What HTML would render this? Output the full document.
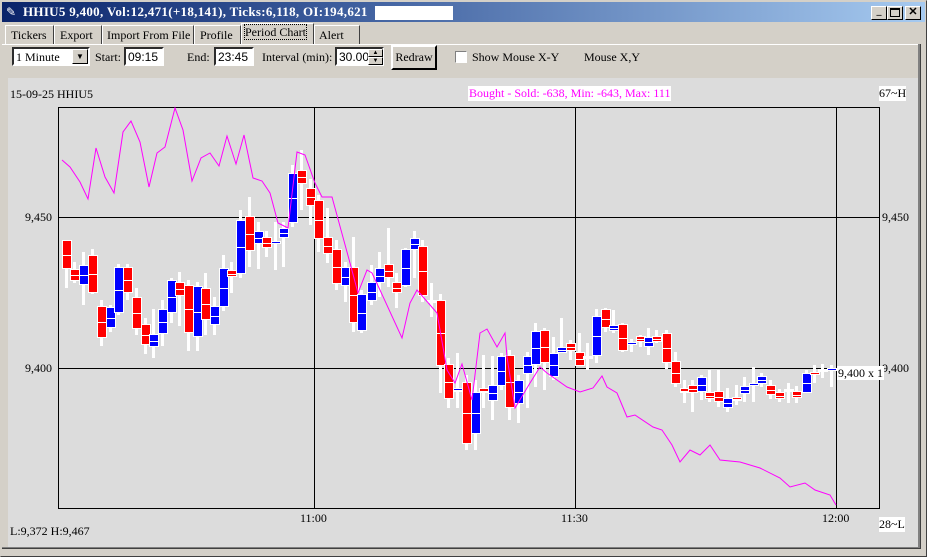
<!DOCTYPE html>
<html><head><style>
*{margin:0;padding:0;box-sizing:border-box}
body{width:927px;height:557px;overflow:hidden;background:#d4d0c8;position:relative;font-family:"Liberation Serif",serif;font-size:12px;color:#000}
.a{position:absolute;white-space:nowrap}
.tab{position:absolute;top:25px;height:20px;border:1px solid;border-color:#fff #404040 #d4d0c8 #fff;padding:2px 0 0 5px;font-size:12px;overflow:hidden}
.inp{position:absolute;background:#fff;border:2px inset #888;border-color:#808080 #fff #fff #808080;height:19px;padding:1px 2px;font-family:"Liberation Sans",sans-serif;font-size:12px}
.btn{position:absolute;border:2px outset #fff;border-color:#fff #404040 #404040 #fff;background:#d4d0c8;text-align:center}
</style></head><body>
<div class="a" style="left:0;top:0;width:927px;height:557px;border:1px solid;border-color:#d4d0c8 #404040 #404040 #d4d0c8"></div>
<div class="a" style="left:2px;top:2px;width:923px;height:20px;background:linear-gradient(90deg,#0a246a 0%,#3a5a9a 35%,#a6caf0 100%)"></div>
<div class="a" style="left:6px;top:5px;width:13px;height:13px;color:#fff;font-size:12px">✎</div>
<div class="a" style="left:23px;top:4px;color:#fff;font-weight:bold;font-size:13px;letter-spacing:0.3px">HHIU5 9,400, Vol:12,471(+18,141), Ticks:6,118, OI:194,621</div>
<div class="a" style="left:375px;top:6px;width:78px;height:14px;background:#fff"></div>
<div class="btn" style="left:871px;top:6px;width:16px;height:14px;border-width:1px;font-size:10px;line-height:10px;font-weight:bold">_</div>
<div class="btn" style="left:887px;top:6px;width:16px;height:14px;border-width:1px"><div style="margin:1px 2px;width:10px;height:9px;border:1px solid #000;border-top-width:2px"></div></div>
<div class="btn" style="left:905px;top:6px;width:16px;height:14px;border-width:1px;font-family:'Liberation Sans';font-size:11px;line-height:11px;font-weight:bold">✕</div>

<div class="tab" style="left:5px;width:49px">Tickers</div>
<div class="tab" style="left:54px;width:48px">Export</div>
<div class="tab" style="left:102px;width:92px;padding-left:4px">Import From File</div>
<div class="tab" style="left:194px;width:47px">Profile</div>
<div class="tab" style="left:241px;top:23px;height:22px;width:73px;padding-top:1px;padding-left:3px"><span style="outline:1px dotted #000">Period Chart</span></div>
<div class="tab" style="left:314px;width:46px;padding-left:4px">Alert</div>
<div class="a" style="left:2px;top:44px;width:917px;height:1px;background:#fff"></div>
<div class="a" style="left:918px;top:44px;width:2px;height:505px;background:#808080"></div>
<div class="a" style="left:920px;top:44px;width:1px;height:505px;background:#404040"></div>

<div class="inp" style="left:12px;top:47px;width:78px;font-family:'Liberation Serif';font-size:12px;padding-top:1px">1 Minute</div>
<div class="btn" style="left:72px;top:49px;width:16px;height:15px;border-width:1px;font-size:8px;line-height:13px">▼</div>
<div class="a" style="left:95px;top:50px">Start:</div>
<div class="inp" style="left:124px;top:47px;width:40px">09:15</div>
<div class="a" style="left:187px;top:50px">End:</div>
<div class="inp" style="left:214px;top:47px;width:40px">23:45</div>
<div class="a" style="left:262px;top:50px">Interval (min):</div>
<div class="inp" style="left:335px;top:47px;width:49px">30.00</div>
<div class="btn" style="left:368px;top:49px;width:15px;height:8px;border-width:1px;font-size:6px;line-height:6px">▲</div>
<div class="btn" style="left:368px;top:57px;width:15px;height:8px;border-width:1px;font-size:6px;line-height:6px">▼</div>
<div class="btn" style="left:391px;top:45px;width:46px;height:25px;padding-top:3px">Redraw</div>
<div class="a" style="left:455px;top:51px;width:12px;height:12px;background:#fff;border:1px solid;border-color:#808080 #fff #fff #808080"></div>
<div class="a" style="left:472px;top:50px">Show Mouse X-Y</div>
<div class="a" style="left:584px;top:50px">Mouse X,Y</div>

<div class="a" style="left:8px;top:78px;width:910px;height:469px;background:#dcdcdc"></div>
<div class="a" style="left:10px;top:87px">15-09-25 HHIU5</div>
<div class="a" style="left:468px;top:86px;background:#fff;color:#f0f;padding:0 1px">Bought - Sold: -638, Min: -643, Max: 111</div>
<div class="a" style="left:879px;top:86px;background:#fff">67~H</div>
<div class="a" style="left:25px;top:210px">9,450</div>
<div class="a" style="left:25px;top:361px">9,400</div>
<div class="a" style="left:882px;top:210px">9,450</div>
<div class="a" style="left:882px;top:361px">9,400</div>
<div class="a" style="left:300px;top:511px">11:00</div>
<div class="a" style="left:561px;top:511px">11:30</div>
<div class="a" style="left:822px;top:511px">12:00</div>
<div class="a" style="left:10px;top:524px">L:9,372 H:9,467</div>
<div class="a" style="left:879px;top:517px;background:#fff">28~L</div>
<div class="a" style="left:2px;top:547px;width:918px;height:1px;background:#808080"></div>
<div class="a" style="left:2px;top:548px;width:918px;height:1px;background:#404040"></div>

<svg class="a" style="left:0;top:0" width="927" height="557" id="s">
<g stroke="#000" stroke-width="1" fill="none" shape-rendering="crispEdges">
<rect x="58.5" y="107.5" width="821" height="401"/>
<line x1="314.5" y1="107" x2="314.5" y2="508"/>
<line x1="575.5" y1="107" x2="575.5" y2="508"/>
<line x1="836.5" y1="107" x2="836.5" y2="508"/>
<line x1="58" y1="217.5" x2="880" y2="217.5"/>
<line x1="58" y1="368.5" x2="880" y2="368.5"/>
</g>
<g id="c" shape-rendering="crispEdges"></g>
<polyline fill="none" stroke="#f0f" stroke-width="1" points="62,160 70,167 80,182 88,199 96,148 105,177 114,193 123,132 131,121 140,142 149,187 157,153 165,147 175,108 183,130 192,181 201,158 210,153 219,166 227,136 236,164 244,135 253,178 262,181 270,193 278,223 288,228 297,152 305,155 315,183 322,197 332,197 350,263 358,293 367,270 372,273 380,290 402,338 410,303 417,290 437,313 447,370 455,383 462,364 472,400 480,333 487,329 497,347 505,333 507,357 515,408 530,383 540,367 547,373 567,387 580,392 593,388 602,376 607,387 617,393 627,417 635,415 653,427 662,430 672,445 680,462 690,450 700,455 710,445 720,460 740,462 760,468 780,478 790,487 805,483 815,490 830,495 836,505"/>
</svg>
<div class="a" style="left:837px;top:366px;background:#fff;padding:0 1px;line-height:14px">9,400 x 1</div>
<script>
var d=`66 r 241 268 240 288
74 r 270 280 262 283
83 b 266 284 252 305
92 r 256 292 249 294
101 r 307 337 300 346
110 b 308 327 305 332
118 b 268 312 264 315
127 r 268 292 264 300
136 r 298 328 288 335
145 r 325 344 318 354
153 b 335 346 309 358
162 b 310 333 300 346
171 b 281 312 278 323
179 r 283 295 272 326
188 r 286 332 280 351
197 b 287 336 282 351
205 r 289 319 273 335
214 b 307 324 297 335
223 b 269 306 255 311
231 r 271 276 262 293
240 b 221 273 210 278
249 r 217 250 197 267
258 b 232 243 222 269
266 r 238 247 231 257
275 b 242 243 222 270
283 b 229 237 222 267
292 b 174 222 165 227
301 r 171 183 150 210
310 r 189 205 179 225
318 r 201 238 195 252
327 r 238 253 208 263
336 r 250 283 240 290
345 b 268 285 262 302
353 r 268 322 237 332
361 b 295 330 290 333
371 b 283 300 265 305
379 b 269 282 252 297
388 r 265 277 228 287
396 r 283 292 273 308
405 b 250 285 248 287
414 b 239 249 231 278
422 r 247 295 240 302
431 w 301 302 283 317
440 r 301 365 294 393
448 r 365 398 358 408
457 b 389 391 353 408
466 r 383 443 375 450
475 b 393 433 380 450
483 r 389 392 355 408
492 b 386 400 356 420
501 b 357 385 353 390
509 r 356 407 350 420
518 b 381 403 375 423
527 b 357 373 352 408
535 b 332 364 323 387
544 r 331 362 328 390
553 b 354 376 337 380
561 b 348 352 318 353
570 r 344 350 340 360
579 r 353 365 333 365
587 w 357 357 343 370
596 b 317 355 309 363
605 r 310 327 308 332
613 b 326 330 310 333
622 r 325 350 323 352
631 b 343 344 339 352
640 r 337 341 335 347
648 b 338 346 328 355
656 r 337 341 330 343
666 r 334 362 330 369
675 r 362 383 352 387
684 r 389 392 380 403
692 r 386 392 380 412
701 b 378 391 375 400
709 r 393 398 370 402
718 r 392 401 370 407
727 b 399 407 388 412
736 r 398 400 385 405
744 b 387 393 377 402
753 b 384 385 367 402
761 b 377 383 373 387
770 r 386 394 380 399
779 r 393 398 389 402
788 w 390 390 383 403
796 r 392 397 386 403
806 b 374 392 370 393
814 r 373 374 365 383
822 w 370 370 364 378
831 b 369 370 365 387`;
var h='';d.split('\n').forEach(function(l){var p=l.split(' '),x=+p[0],t=+p[2],b=+p[3],wt=+p[4],wb=+p[5],c=p[1]=='r'?'#f00':p[1]=='b'?'#00f':'#fff';
h+='<rect x="'+(x-1)+'" y="'+wt+'" width="3" height="'+(wb-wt)+'" fill="#fff"/>';
h+='<rect x="'+(x-3)+'" y="'+(Math.round((t+b)/2)-1)+'" width="7" height="2" fill="#fff"/>';
if(b-t>=2)h+='<rect x="'+(x-4)+'" y="'+(t-1)+'" width="10" height="'+(b-t+2)+'" fill="#fff"/><rect x="'+(x-3)+'" y="'+t+'" width="8" height="'+(b-t)+'" fill="'+c+'"/><rect x="'+(x-3)+'" y="'+Math.round((t+b)/2)+'" width="8" height="1" fill="#fff"/>';
else h+='<rect x="'+(x-4)+'" y="'+(t-1)+'" width="10" height="3" fill="#fff"/><rect x="'+(x-3)+'" y="'+t+'" width="8" height="1" fill="'+c+'"/>';});
document.getElementById('c').innerHTML=h;
</script>
</body></html>
